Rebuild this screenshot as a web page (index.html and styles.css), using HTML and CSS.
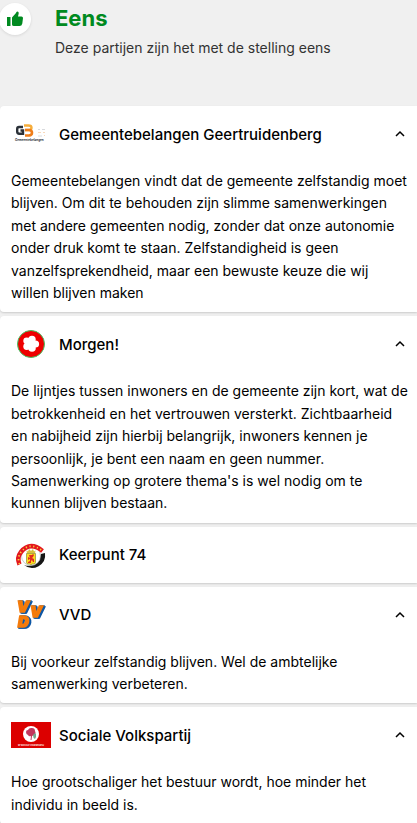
FILE: index.html
```
<!doctype html>
<html lang="nl">
    <head>
        <meta charset="UTF-8" />
        <meta name="viewport" content="width=device-width, initial-scale=1.0" />
        <title>Eens</title>
        <link rel="stylesheet" href="styles.css">
    </head>
    <body>
        <header class="header">
            <div class="thumb">
                <svg width="18" height="16" viewBox="0 0 18 16" fill="#008a20">
                    <path d="M1 6h3.500v9H1z" />
                    <path d="M6 6.500 10 2q.2-1.500 1.300-1.500Q13 .6 12.700 2.500L12 5.500h3.500Q17 5.600 17 7l-.7 5.500Q15.800 15 13.500 15H8q-2 0-2-1.500z" />
                </svg>
            </div>
            <div>
                <h1>Eens</h1>
                <p>Deze partijen zijn het met de stelling eens</p>
            </div>
        </header>

        <main class="parties">
            <section class="party">
                <button class="party-header" aria-expanded="true">
                    <svg class="logo" width="40" height="26" viewBox="0 0 40 26">
                        <path d="M12 6H8Q6.200 6 6.200 8v2.500q0 2.200 2 2.200H12V9.500h-2.500" fill="none" stroke="#2b3138" stroke-width="2.400" />
                        <path d="M13 4.500h4.500q3 0 3 2.200T18 9h-4" fill="none" stroke="#f6ae3c" stroke-width="2.400" />
                        <path d="M14 9h4q3 .2 3 2.700T18 14.500h-4" fill="none" stroke="#ef7d1a" stroke-width="2.600" />
                        <path d="M27 8.500h2m2 0h3M27 15h4" stroke="#d8dadd" />
                        <path d="M27 11.500h3m2 0h2m-1 3h1" stroke="#f8d9bb" />
                        <text x="4" y="20" font-size="3" font-weight="700" fill="#2b3138">Gemeentebelangen</text>
                    </svg>
                    <span class="name">Gemeentebelangen Geertruidenberg</span>
                    <svg class="chevron" width="10" height="8" viewBox="0 0 10 8"><path d="M1 6l4-4 4 4" /></svg>
                </button>
                <p class="opinion">Gemeentebelangen vindt dat de gemeente zelfstandig moet blijven. Om dit te behouden zijn slimme samenwerkingen met andere gemeenten nodig, zonder dat onze autonomie onder druk komt te staan. Zelfstandigheid is geen vanzelfsprekendheid, maar een bewuste keuze die wij willen blijven maken</p>
            </section>

            <section class="party">
                <button class="party-header" aria-expanded="true">
                    <svg class="logo" width="40" height="28" viewBox="0 0 40 28">
                        <circle cx="20" cy="14" r="13.500" fill="#ee0000" stroke="#43c463" />
                        <g fill="#fff">
                            <circle cx="21" cy="9.500" r="3.700" />
                            <circle cx="24.500" cy="14" r="3.600" />
                            <circle cx="21" cy="18" r="3.800" />
                            <circle cx="15.700" cy="16.500" r="3.400" />
                            <circle cx="15.700" cy="10.800" r="3.400" />
                            <circle cx="20" cy="14" r="4.500" />
                        </g>
                    </svg>
                    <span class="name">Morgen!</span>
                    <svg class="chevron" width="10" height="8" viewBox="0 0 10 8"><path d="M1 6l4-4 4 4" /></svg>
                </button>
                <p class="opinion">De lijntjes tussen inwoners en de gemeente zijn kort, wat de betrokkenheid en het vertrouwen versterkt. Zichtbaarheid en nabijheid zijn hierbij belangrijk, inwoners kennen je persoonlijk, je bent een naam en geen nummer. Samenwerking op grotere thema's is wel nodig om te kunnen blijven bestaan.</p>
            </section>

            <section class="party">
                <button class="party-header">
                    <svg class="logo" width="40" height="28" viewBox="0 0 40 28">
                        <path d="M34 12A13 13 0 0 1 13 24q12 4 17-11z" fill="#161616" />
                        <circle cx="20" cy="15" r="9.500" fill="#fff" stroke="#aaa" stroke-width=".6" />
                        <path d="M8.500 23.500A12 12 0 0 1 10 11Q19 0 31.500 10" fill="none" stroke="#e3161d" stroke-width="4.500" />
                        <path d="M8.500 23A12 12 0 0 1 10 11Q19 0 31.500 10" fill="none" stroke="#f6d13a" stroke-width="1.800" stroke-dasharray="1.200 2.600" />
                        <path d="M15.500 9.500l1.500 1 1-2.500 2 2 2-2 1 2.500 1.500-1-.5 3h-8z" fill="#d6c03c" />
                        <path d="M15.500 12.500h9v9q0 1.500-2 1.500h-1L20 24l-1.500-1h-1q-2 0-2-1.500z" fill="#ffd91d" stroke="#9a9a3e" stroke-width=".8" />
                        <path d="M18 14h3l1-1 1 1-1 2-1 1 2 1v3h-1l-1-2-1 1v2h-3v-1l2-1v-2l-2 1v-3l2 1z" fill="#e02c20" />
                    </svg>
                    <span class="name">Keerpunt 74</span>
                </button>
            </section>

            <section class="party">
                <button class="party-header" aria-expanded="true">
                    <svg class="logo vvd" width="40" height="28" viewBox="0 0 40 28">
                        <text x="6" y="11">V</text>
                        <text x="19" y="16">V</text>
                        <text x="7" y="26">D</text>
                    </svg>
                    <span class="name">VVD</span>
                    <svg class="chevron" width="10" height="8" viewBox="0 0 10 8"><path d="M1 6l4-4 4 4" /></svg>
                </button>
                <p class="opinion">Bij voorkeur zelfstandig blijven. Wel de ambtelijke samenwerking verbeteren.</p>
            </section>

            <section class="party">
                <button class="party-header" aria-expanded="true">
                    <svg class="logo" width="40" height="26" viewBox="0 0 40 26">
                        <path d="M0 0h40v26H0z" fill="#dc0000" />
                        <circle cx="20" cy="12" r="8" fill="#fff" />
                        <path d="M15 10q0-2 2-2 1-2.500 4-2 3 0 3 3 1.500 2-.5 4L21 14l-.5 4h-1l.5-4q-2 1-3-1-2-.5-2-3z" fill="#c2375d" />
                        <path d="M22 13q2-3 3-1 .5 3-1 5-2-1-2-4z" fill="#78a68d" />
                        <text x="20" y="24" font-size="2" font-weight="700" text-anchor="middle" fill="#fff">SP SOCIALE VOLKSPARTIJ</text>
                    </svg>
                    <span class="name">Sociale Volkspartij</span>
                    <svg class="chevron" width="10" height="8" viewBox="0 0 10 8"><path d="M1 6l4-4 4 4" /></svg>
                </button>
                <p class="opinion">Hoe grootschaliger het bestuur wordt, hoe minder het individu in beeld is.</p>
            </section>
        </main>
    </body>
</html>
```

FILE: styles.css
```
body {
    margin: 0;
    background-color: #f0f0f0;
    color: #000;
    font-family: Inter, sans-serif;
    font-size: 14px;
    line-height: 1.6;
    overflow-x: hidden;
}
.header {
    display: flex;
    gap: 24px;
    padding-top: 3px;
    height: 106px;
    box-sizing: border-box;
}
.thumb {
    display: flex;
    align-items: center;
    justify-content: center;
    flex: none;
    width: 32px;
    height: 32px;
    margin-left: -1px;
    border-radius: 50%;
    background-color: #fff;
    box-shadow: 0 1px 3px rgba(0, 0, 0, 0.1);
}
h1 {
    margin: 0;
    color: #008a20;
    font-size: 22px;
    font-weight: 700;
    line-height: 30px;
}
.header p {
    margin: 4px 0 0;
    color: #333;
}
.parties {
    display: flex;
    flex-direction: column;
    gap: 4px;
}
.party {
    background-color: #fff;
    border-radius: 4px 0 0 4px;
    box-shadow: 0 1px 2px rgba(0, 0, 0, 0.15);
}
.party-header {
    display: flex;
    align-items: center;
    gap: 8px;
    width: 100%;
    height: 56px;
    padding: 0 12px 0 11px;
    border: none;
    background: none;
    color: #000;
    font-family: inherit;
    font-size: 15px;
    font-weight: 500;
    text-align: left;
    cursor: pointer;
}
.name {
    flex: 1;
}
.logo {
    flex: none;
    overflow: visible;
}
.vvd {
    fill: #f47b0b;
    stroke: #f47b0b;
    stroke-width: 1.6;
    font-size: 15px;
    font-style: italic;
    font-weight: 900;
    filter: drop-shadow(1px 1px 0 #0d57a5) drop-shadow(1px 0 0 #0d57a5);
}
.chevron {
    flex: none;
    fill: none;
    stroke: #000;
    stroke-width: 1.5;
}
.opinion {
    margin: 0;
    padding: 8px 8px 8px 11px;
}
```
